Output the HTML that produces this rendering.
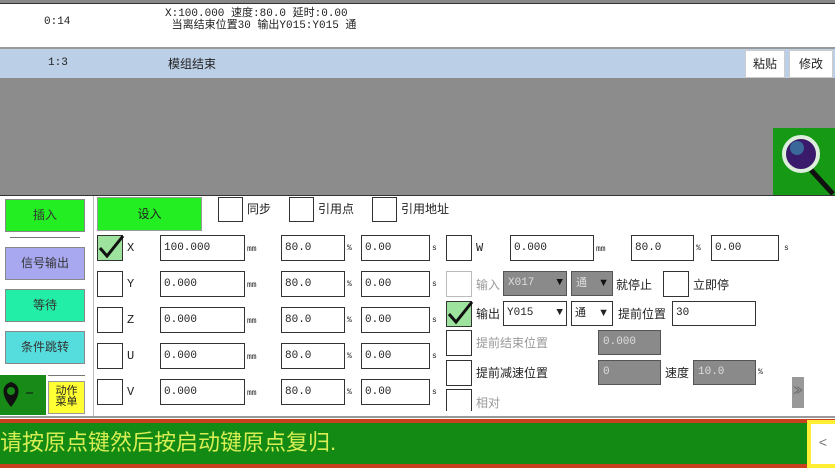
<!DOCTYPE html>
<html><head><meta charset="utf-8"><style>
*{margin:0;padding:0;box-sizing:border-box}
body{width:835px;height:468px;overflow:hidden;background:#fff;font-family:"Liberation Mono","Noto Sans CJK SC",monospace;font-size:11px;color:#222;position:relative}
.a{position:absolute}
.cn{font-family:"Liberation Sans","Noto Sans CJK SC",sans-serif}
.inp{position:absolute;border:1px solid #333;background:#fff;height:26px;line-height:24px;padding-left:3px;font-size:11px}
.cb{position:absolute;width:26px;height:26px;border:1px solid #333;background:#fff}
.cbk{background:#9de29d}
.lb{position:absolute;font-size:12px}
.u{position:absolute;font-size:8px}
.btn{position:absolute;left:5px;width:80px;height:33px;border:1px solid #888;text-align:center;line-height:31px;font-size:12px;color:#333}
.gin{position:absolute;background:#8a8a8a;border:1px solid #555;color:#ddd;height:25px;line-height:23px;padding-left:4px;font-size:11px}
</style></head><body>
<div class="a" style="left:0;top:0;width:835px;height:3px;background:#888"></div>
<div class="a" style="left:0;top:3px;width:835px;height:1px;background:#333"></div>
<div class="a" style="left:44px;top:16px;font-size:11px">0:14</div>
<div class="a" style="left:165px;top:8px;font-size:11px;line-height:12px">X:100.000 速度:80.0 延时:0.00<br>&nbsp;当离结束位置30 输出Y015:Y015 通</div>
<div class="a" style="left:0;top:47px;width:835px;height:2px;background:#999"></div>
<div class="a" style="left:0;top:49px;width:835px;height:29px;background:#bbcfe6"></div>
<div class="a" style="left:48px;top:57px">1:3</div>
<div class="a cn" style="left:168px;top:55px;font-size:12px">模组结束</div>
<div class="a cn" style="left:745px;top:50px;width:40px;height:28px;background:#fff;border:1px solid #ccc;text-align:center;line-height:26px;font-size:12px">粘贴</div>
<div class="a cn" style="left:789px;top:50px;width:44px;height:28px;background:#fff;border:1px solid #ccc;text-align:center;line-height:26px;font-size:12px">修改</div>
<div class="a" style="left:0;top:78px;width:835px;height:117px;background:#8c8c8c"></div>
<div class="a" style="left:773px;top:128px;width:62px;height:67px;background:#169a16"></div>
<svg class="a" style="left:773px;top:128px" width="62" height="67"><line x1="38" y1="42" x2="60" y2="66" stroke="#111" stroke-width="5"/><circle cx="28" cy="26" r="17" fill="#3a1a6a" stroke="#ddeedd" stroke-width="4"/><circle cx="24" cy="20" r="7" fill="#3a8ab0" opacity=".7"/></svg>
<div class="a" style="left:0;top:195px;width:835px;height:1px;background:#333"></div>
<div class="btn cn" style="top:199px;background:#22ee22">插入</div>
<div class="a" style="left:10px;top:237px;width:70px;height:1px;background:#777"></div>
<div class="btn cn" style="top:247px;background:#a8a8f0">信号输出</div>
<div class="btn cn" style="top:289px;background:#22eea8">等待</div>
<div class="btn cn" style="top:331px;background:#55dddd">条件跳转</div>
<div class="a" style="left:48px;top:375px;width:37px;height:1px;background:#777"></div>
<div class="a" style="left:0;top:375px;width:46px;height:40px;background:#178a17"></div>
<svg class="a" style="left:0;top:375px" width="46" height="40"><path d="M11 32 C1 20 1 10 11 7 C21 10 21 20 11 32Z" fill="#111"/><circle cx="11" cy="16" r="4" fill="#178a17"/><line x1="26" y1="18" x2="33" y2="18" stroke="#111"/></svg>
<div class="a cn" style="left:48px;top:381px;width:37px;height:33px;background:#ffff33;border:1px solid #999;text-align:center;font-size:11px;line-height:11px;padding-top:4px">动作<br>菜单</div>
<div class="a" style="left:93px;top:196px;width:1px;height:222px;background:#bbb"></div>
<div class="a cn" style="left:97px;top:197px;width:105px;height:34px;background:#22ee22;border:1px solid #999;text-align:center;line-height:32px;font-size:12px">设入</div>
<div class="cb" style="left:218px;top:197px;width:25px;height:25px"></div><div class="lb cn" style="left:247px;top:200px">同步</div>
<div class="cb" style="left:289px;top:197px;width:25px;height:25px"></div><div class="lb cn" style="left:318px;top:200px">引用点</div>
<div class="cb" style="left:372px;top:197px;width:25px;height:25px"></div><div class="lb cn" style="left:401px;top:200px">引用地址</div>
<div class="cb cbk" style="left:97px;top:235px"></div>
<svg class="a" style="left:97px;top:233px" width="28" height="28"><path d="M3 15 L10 23 L26 3" fill="none" stroke="#111" stroke-width="3"/></svg>
<div class="lb" style="left:127px;top:241px">X</div>
<div class="inp" style="left:160px;top:235px;width:85px">100.000</div><div class="u" style="left:247px;top:245px">mm</div>
<div class="inp" style="left:281px;top:235px;width:64px">80.0</div><div class="u" style="left:347px;top:244px">%</div>
<div class="inp" style="left:361px;top:235px;width:69px">0.00</div><div class="u" style="left:432px;top:244px">s</div>
<div class="cb" style="left:97px;top:271px"></div><div class="lb" style="left:127px;top:277px">Y</div>
<div class="inp" style="left:160px;top:271px;width:85px">0.000</div><div class="u" style="left:247px;top:281px">mm</div>
<div class="inp" style="left:281px;top:271px;width:64px">80.0</div><div class="u" style="left:347px;top:280px">%</div>
<div class="inp" style="left:361px;top:271px;width:69px">0.00</div><div class="u" style="left:432px;top:280px">s</div>
<div class="cb" style="left:97px;top:307px"></div><div class="lb" style="left:127px;top:313px">Z</div>
<div class="inp" style="left:160px;top:307px;width:85px">0.000</div><div class="u" style="left:247px;top:317px">mm</div>
<div class="inp" style="left:281px;top:307px;width:64px">80.0</div><div class="u" style="left:347px;top:316px">%</div>
<div class="inp" style="left:361px;top:307px;width:69px">0.00</div><div class="u" style="left:432px;top:316px">s</div>
<div class="cb" style="left:97px;top:343px"></div><div class="lb" style="left:127px;top:349px">U</div>
<div class="inp" style="left:160px;top:343px;width:85px">0.000</div><div class="u" style="left:247px;top:353px">mm</div>
<div class="inp" style="left:281px;top:343px;width:64px">80.0</div><div class="u" style="left:347px;top:352px">%</div>
<div class="inp" style="left:361px;top:343px;width:69px">0.00</div><div class="u" style="left:432px;top:352px">s</div>
<div class="cb" style="left:97px;top:379px"></div><div class="lb" style="left:127px;top:385px">V</div>
<div class="inp" style="left:160px;top:379px;width:85px">0.000</div><div class="u" style="left:247px;top:389px">mm</div>
<div class="inp" style="left:281px;top:379px;width:64px">80.0</div><div class="u" style="left:347px;top:388px">%</div>
<div class="inp" style="left:361px;top:379px;width:69px">0.00</div><div class="u" style="left:432px;top:388px">s</div>
<div class="cb" style="left:446px;top:235px"></div><div class="lb" style="left:476px;top:241px">W</div>
<div class="inp" style="left:510px;top:235px;width:84px">0.000</div><div class="u" style="left:596px;top:245px">mm</div>
<div class="inp" style="left:631px;top:235px;width:63px">80.0</div><div class="u" style="left:696px;top:244px">%</div>
<div class="inp" style="left:711px;top:235px;width:68px">0.00</div><div class="u" style="left:784px;top:244px">s</div>
<div class="cb" style="left:446px;top:271px;border-color:#bbb"></div><div class="lb cn" style="left:476px;top:276px;color:#999">输入</div>
<div class="gin" style="left:503px;top:271px;width:64px">X017<span style="position:absolute;right:3px;color:#111">▼</span></div>
<div class="gin cn" style="left:571px;top:271px;width:42px">通<span style="position:absolute;right:3px;color:#111">▼</span></div>
<div class="lb cn" style="left:616px;top:276px">就停止</div>
<div class="cb" style="left:663px;top:271px"></div><div class="lb cn" style="left:693px;top:276px">立即停</div>
<div class="cb cbk" style="left:446px;top:301px"></div>
<svg class="a" style="left:446px;top:299px" width="28" height="28"><path d="M3 15 L10 23 L26 3" fill="none" stroke="#111" stroke-width="3"/></svg>
<div class="lb cn" style="left:476px;top:305px">输出</div>
<div class="inp" style="left:503px;top:301px;width:64px;height:25px;line-height:23px">Y015<span style="position:absolute;right:3px">▼</span></div>
<div class="inp cn" style="left:571px;top:301px;width:42px;height:25px;line-height:23px">通<span style="position:absolute;right:3px">▼</span></div>
<div class="lb cn" style="left:618px;top:305px">提前位置</div>
<div class="inp" style="left:672px;top:301px;width:84px;height:25px;line-height:23px">30</div>
<div class="cb" style="left:446px;top:330px"></div><div class="lb cn" style="left:476px;top:334px;color:#999">提前结束位置</div>
<div class="gin" style="left:598px;top:330px;width:63px">0.000</div>
<div class="cb" style="left:446px;top:360px"></div><div class="lb cn" style="left:476px;top:364px">提前减速位置</div>
<div class="gin" style="left:598px;top:360px;width:63px">0</div>
<div class="lb cn" style="left:665px;top:364px">速度</div>
<div class="gin" style="left:693px;top:360px;width:63px">10.0</div>
<div class="u" style="left:758px;top:368px">%</div>
<div class="cb" style="left:446px;top:389px;height:22px;border-bottom:none"></div><div class="lb cn" style="left:476px;top:394px;color:#999">相对</div>
<div class="a" style="left:792px;top:377px;width:12px;height:31px;background:#999;color:#555;font-size:10px;text-align:center;line-height:31px">≫</div>
<div class="a" style="left:0;top:416px;width:835px;height:2px;background:#999"></div>
<div class="a" style="left:0;top:419px;width:835px;height:49px;background:#c8401e"></div>
<div class="a" style="left:0;top:423px;width:808px;height:41px;background:#138a13"></div>
<div class="a cn" style="left:0;top:428px;font-size:22px;color:#d8ee55;line-height:30px">请按原点键然后按启动键原点复归.</div>
<div class="a" style="left:807px;top:420px;width:28px;height:48px;background:#ffee33"></div>
<div class="a" style="left:811px;top:424px;width:24px;height:40px;background:#fff;color:#777;font-size:14px;line-height:40px;text-align:center">&lt;</div>
</body></html>
